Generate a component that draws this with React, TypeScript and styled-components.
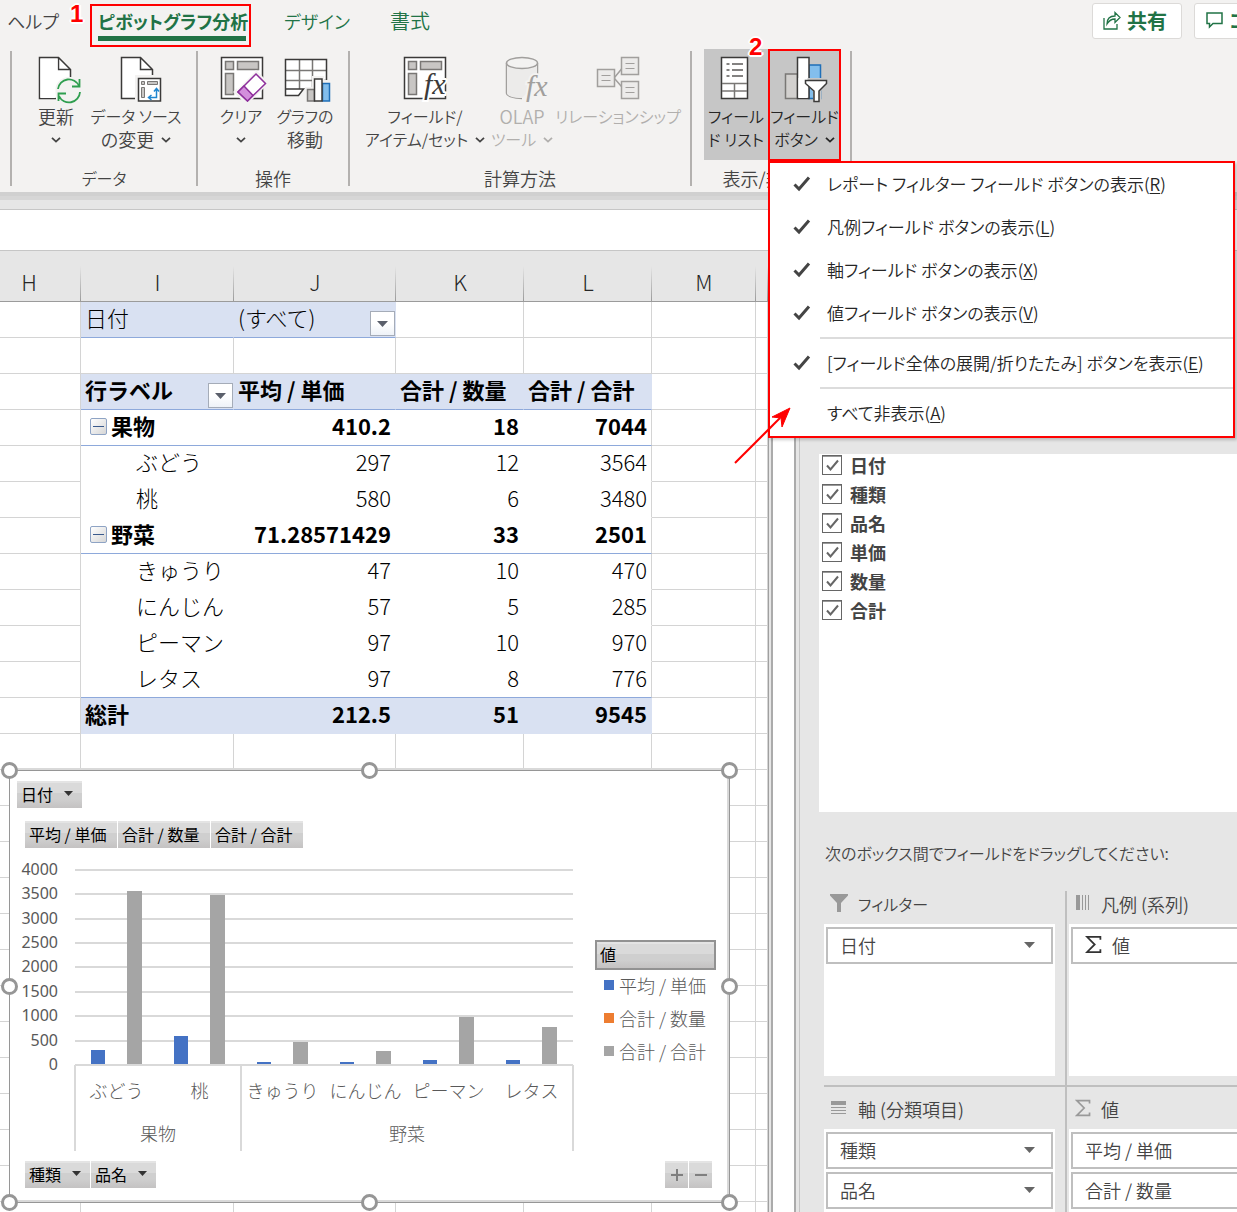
import React from "react";
import styled, { createGlobalStyle, css } from "styled-components";

const uiFont = `"Noto Sans CJK JP", "Noto Sans", sans-serif`;

const GlobalStyle = createGlobalStyle`
  * { box-sizing: border-box; }
  body {
    margin: 0;
    font-family: ${uiFont};
    font-weight: 300;
    color: #444;
    background: #e6e6e6;
  }
  button, input {
    margin: 0;
    padding: 0;
    border: 0;
    background: none;
    font: inherit;
    color: inherit;
  }
  svg { display: block; flex: none; }
`;

/* ---------- shell ---------- */

const Shell = styled.div`
  position: relative;
  display: flex;
  flex-direction: column;
  height: 100vh;
  overflow: hidden;
`;

const Ribbon = styled.header`
  flex: none;
  background: #f3f2f1;
  font-size: 18px;
  font-weight: 350;
  font-feature-settings: "palt";
`;

const TopBar = styled.div`
  display: flex;
  justify-content: space-between;
  height: 49px;
`;

const Tabs = styled.nav`
  display: flex;
  align-items: flex-start;
  padding-top: 4px;
  line-height: 34px;
`;

const Tab = styled.button<{ $accent?: boolean; $kanji?: boolean; $width: number }>`
  width: ${(p) => p.$width}px;
  font-size: ${(p) => (p.$kanji ? 20 : 18)}px;
  text-align: center;
  white-space: nowrap;
  color: ${(p) => (p.$accent ? "#217346" : "#444")};
`;

const ActiveTab = styled.button`
  display: flex;
  flex-direction: column;
  width: 161px;
  height: 43px;
  margin-left: 24px;
  padding: 0 3px 0 6px;
  border: 2px solid #f00;
  font-weight: 700;
  line-height: 30px;
  white-space: nowrap;
  color: #217346;
  &::after {
    content: "";
    width: 100%;
    height: 5px;
    background: #217346;
  }
`;

const Badge = styled.span<{ $x: number; $y: number }>`
  position: absolute;
  left: ${(p) => p.$x}px;
  top: ${(p) => p.$y}px;
  z-index: 5;
  font: 700 24px/24px "Liberation Sans", sans-serif;
  color: #f00;
  text-shadow: 2px 0 #fff, -2px 0 #fff, 0 2px #fff, 0 -2px #fff, 1px 1px #fff, -1px 1px #fff;
`;

const Actions = styled.div`
  display: flex;
  gap: 12px;
  width: 145px;
  padding-top: 3px;
  overflow: hidden;
`;

const ActionButton = styled.button<{ $width: number }>`
  display: flex;
  flex: none;
  align-items: center;
  gap: 6px;
  width: ${(p) => p.$width}px;
  height: 36px;
  padding: 0 10px 2px;
  border: 1px solid #dcdad8;
  border-radius: 3px;
  background: #fff;
  font-size: 20px;
  font-weight: 700;
  color: #217346;
  white-space: nowrap;
`;

const Groups = styled.div`
  display: flex;
  height: 143px;
  padding-left: 10px;
`;

const Divider = styled.span`
  flex: none;
  width: 2px;
  height: 135px;
  margin-top: 2px;
  background: #b3b1af;
`;

const Group = styled.section<{ $width: number; $pad: number }>`
  display: flex;
  flex-direction: column;
  flex: none;
  width: ${(p) => p.$width}px;
  & > div { padding-left: ${(p) => p.$pad}px; }
`;

const GroupTools = styled.div`
  display: flex;
  height: 112px;
`;

const GroupLabel = styled.h2<{ $kana?: boolean }>`
  margin: 0;
  padding-top: 5px;
  font-size: ${(p) => (p.$kana ? 16 : 18)}px;
  font-weight: 350;
  line-height: 24px;
  text-align: center;
`;

const Tool = styled.button<{ $width: number; $pressed?: boolean; $framed?: boolean }>`
  display: flex;
  flex-direction: column;
  align-items: center;
  flex: none;
  width: ${(p) => p.$width}px;
  height: 111px;
  padding-top: 6px;
  line-height: 23px;
  white-space: nowrap;
  ${(p) => p.$pressed && css`background: #c6c6c6; color: #262626;`}
  ${(p) => p.$framed && css`
    height: 112px;
    padding-top: 4px;
    border: 2px solid #f00;
  `}
  &:disabled { color: #b1afad; }
`;

const ToolLine = styled.span<{ $kanji?: boolean }>`
  display: flex;
  align-items: center;
  justify-content: center;
  gap: 7px;
  height: 23px;
  font-size: ${(p) => (p.$kanji ? 18 : 16)}px;
`;

const ToolText = styled.span`
  display: block;
  padding-top: 2px;
`;

const MenuAnchor = styled.div`
  position: relative;
`;

/* ---------- menu ---------- */

const Menu = styled.div`
  position: absolute;
  left: 0;
  top: 100%;
  z-index: 4;
  width: 467px;
  padding-bottom: 1px;
  border: 2px solid #f00;
  background: #fff;
  box-shadow: 2px 2px 3px rgba(0, 0, 0, 0.2);
  color: #262626;
`;

const MenuItem = styled.button`
  display: flex;
  align-items: center;
  width: 100%;
  height: 43px;
  padding: 0 0 2px 23px;
  font-size: 17px;
  white-space: nowrap;
  u { text-underline-offset: 2px; }
`;

const CheckSlot = styled.span`
  flex: none;
  width: 34px;
`;

const MenuRule = styled.hr`
  height: 2px;
  margin: 2px 0 3px 50px;
  border: 0;
  background: #dcdcdc;
`;

/* ---------- sheet ---------- */

const RibbonEdge = styled.div`
  flex: none;
  height: 18px;
  border-bottom: 1px solid #c6c6c6;
  background: linear-gradient(#d0d0d0 0 4px, #d6d6d6 4px 8px, #e6e6e6 8px);
`;

const FormulaBar = styled.div`
  flex: none;
  height: 41px;
  border-bottom: 1px solid #c6c6c6;
  background: #fff;
`;

const Body = styled.main`
  display: flex;
  flex: 1;
  min-height: 0;
`;

const Sheet = styled.section`
  position: relative;
  flex: 1;
  min-width: 0;
  overflow: hidden;
  background: #fff;
`;

const Grid = styled.table`
  width: 100%;
  table-layout: fixed;
  border-collapse: separate;
  border-spacing: 0;
  font-size: 22px;
  line-height: 30px;
  color: #000;
`;

const HeadCell = styled.th<{ $shift?: boolean }>`
  height: 51px;
  padding: 10px ${(p) => (p.$shift ? 23 : 0)}px 0 0;
  border-bottom: 1px solid #9b9b9b;
  background: linear-gradient(#e6e6e6, #9b9b9b) right bottom / 1px 35px no-repeat, #e6e6e6;
  font-weight: 300;
  color: #262626;
`;

type CellKind = "grid" | "plain" | "fill";

const Cell = styled.td<{ $kind: CellKind; $rule?: boolean; $edge?: boolean; $bold?: boolean; $num?: boolean; $indent?: boolean }>`
  height: 36px;
  padding: 0 4px 5px ${(p) => (p.$indent ? 55 : 4)}px;
  border-right: 1px solid ${(p) => (p.$kind === "grid" || p.$edge ? "#d4d4d4" : p.$kind === "fill" ? "#d9e1f2" : "#fff")};
  border-bottom: 1px solid
    ${(p) => (p.$rule ? "#8ea9db" : p.$kind === "grid" ? "#d4d4d4" : p.$kind === "fill" ? "#d9e1f2" : "#fff")};
  background: ${(p) => (p.$kind === "fill" ? "#d9e1f2" : "#fff")};
  font-weight: ${(p) => (p.$bold ? 700 : 300)};
  text-align: ${(p) => (p.$num ? "right" : "left")};
  white-space: nowrap;
  ${(p) => p.$rule && p.$kind === "plain" && css`border-right-width: ${p.$edge ? 1 : 0}px;`}
  ${(p) => p.$rule && p.$kind === "plain" && p.$num && !p.$edge && css`padding-right: 5px;`}
`;

const CellRow = styled.div`
  display: flex;
  align-items: center;
  justify-content: space-between;
  height: 30px;
`;

const CellLead = styled.span`
  display: flex;
  align-items: center;
  gap: 4px;
  padding-left: 5px;
`;

const FilterButton = styled.button`
  display: grid;
  place-items: center;
  width: 25px;
  height: 25px;
  margin: 9px -4px -4px 0;
  border: 1px solid #a5acb8;
  background: linear-gradient(#fff 50%, #eef2f8);
`;

const CollapseButton = styled.button`
  display: grid;
  place-items: center;
  width: 17px;
  height: 17px;
  margin-top: 3px;
  border: 1px solid #8ea3c4;
  border-radius: 2px;
  background: linear-gradient(135deg, #fff, #d6d6d6);
`;

/* ---------- chart ---------- */

const Chart = styled.section`
  position: absolute;
  left: 9px;
  top: 519px;
  display: flex;
  flex-direction: column;
  width: 721px;
  height: 433px;
  padding: 10px 17px 0 7px;
  border: 1px solid #969696;
  background: #fff;
  box-shadow: 0 -2px #d9d9d9, inset -2px -2px #d9d9d9;
`;

const ChartRow = styled.div<{ $top?: number; $inset?: boolean }>`
  display: flex;
  gap: 1px;
  margin-top: ${(p) => p.$top || 0}px;
  padding-left: ${(p) => (p.$inset ? 8 : 0)}px;
`;

const FieldButton = styled.button<{ $width: number }>`
  display: flex;
  align-items: center;
  gap: 11px;
  width: ${(p) => p.$width}px;
  height: 27px;
  padding: 0 0 2px 4px;
  background: linear-gradient(#e4e4e4 0 2px, #dadada 2px 12px, #cfcfcf 12px 18px, #c4c2c2);
  font-size: 16px;
  font-weight: 400;
  line-height: 24px;
  white-space: nowrap;
  color: #000;
`;

const ZoomButton = styled(FieldButton)`
  justify-content: center;
  padding: 0;
`;

const Spacer = styled.span`
  flex: 1;
`;

const PlotRow = styled.div`
  display: flex;
  height: 313px;
`;

const Legend = styled.div`
  width: 121px;
  margin: 92px 0 0 18px;
`;

const LegendTitle = styled(FieldButton)`
  height: 30px;
  border: 2px solid #929292;
  padding-left: 3px;
`;

const LegendList = styled.ul`
  margin: 0;
  padding: 0 0 0 9px;
  list-style: none;
`;

const LegendItem = styled.li<{ $color: string }>`
  display: flex;
  align-items: center;
  gap: 5px;
  height: 33px;
  padding-bottom: 4px;
  font-size: 18px;
  white-space: nowrap;
  color: #595959;
  &::before {
    content: "";
    width: 10px;
    height: 10px;
    background: ${(p) => p.$color};
  }
`;

const Handle = styled.i<{ $x: string; $y: string }>`
  position: absolute;
  left: ${(p) => p.$x};
  top: ${(p) => p.$y};
  width: 17px;
  height: 17px;
  margin: -9px;
  border: 3px solid #969696;
  border-radius: 50%;
  background: #fff;
`;

/* ---------- field pane ---------- */

const Gutter = styled.div`
  flex: none;
  width: 32px;
  background: linear-gradient(
    90deg,
    #a0a0a0 0 1px,
    #e6e6e6 1px 3px,
    #ababab 3px 5px,
    #fff 5px 26px,
    #ababab 26px 28px,
    #e6e6e6 28px 31px,
    #c6c6c6 31px
  );
`;

const Pane = styled.aside`
  flex: none;
  width: 437px;
  padding: 203px 0 0 19px;
  overflow: hidden;
  font-size: 18px;
  font-weight: 350;
  font-feature-settings: "palt";
`;

const FieldList = styled.div`
  display: flex;
  flex-direction: column;
  gap: 7px;
  height: 358px;
  padding: 0 3px;
  background: #fff;
`;

const FieldLabel = styled.label`
  display: grid;
  grid-template-columns: 20px auto;
  justify-content: start;
  align-items: center;
  column-gap: 8px;
  height: 22px;
  font-weight: 700;
  line-height: 22px;
  & > input, & > svg { grid-area: 1 / 1; }
  & > svg { pointer-events: none; }
`;

const FieldCheck = styled.input`
  appearance: none;
  width: 20px;
  height: 20px;
  border: 1px solid #666;
  box-shadow: inset 0 1px #999;
  background: #fff;
  & + svg { visibility: hidden; }
  &:checked + svg { visibility: visible; }
`;

const Hint = styled.p`
  margin: 29px 0 17px 6px;
  font-size: 16px;
  line-height: 24px;
  white-space: nowrap;
`;

const Zones = styled.div`
  display: grid;
  grid-template-columns: 241px 241px;
  margin-left: 5px;
`;

const Zone = styled.section<{ $side?: boolean; $lower?: boolean }>`
  padding: 0 10px 9px 0;
  border-top: ${(p) => (p.$lower ? "2px solid #bfbfbf" : "0")};
  ${(p) => p.$side && css`
    padding: 0 0 9px 4px;
    background: linear-gradient(#bfbfbf, #bfbfbf) left bottom / 2px ${p.$lower ? "100%" : "calc(100% - 9px)"} no-repeat;
  `}
`;

const ZoneTitle = styled.h3<{ $kana?: boolean }>`
  display: flex;
  align-items: center;
  gap: 10px;
  height: 42px;
  margin: 0;
  padding: 2px 0 0 6px;
  font-size: ${(p) => (p.$kana ? 16 : 18)}px;
  font-weight: 350;
  white-space: nowrap;
  & > svg { margin-bottom: 2px; }
`;

const ZoneBox = styled.div`
  display: flex;
  flex-direction: column;
  gap: 3px;
  height: 152px;
  padding: 3px 2px;
  background: #fff;
`;

const ZoneItem = styled.button`
  display: flex;
  align-items: center;
  gap: 10px;
  flex: none;
  height: 37px;
  padding: 0 16px 2px 12px;
  border: 2px solid #bfbfbf;
  text-align: left;
  white-space: nowrap;
`;

const Arrow = styled.svg`
  position: absolute;
  left: 730px;
  top: 400px;
  z-index: 6;
  pointer-events: none;
`;

/* ---------- icons ---------- */

const Chevron = () => (
  <svg width="10" height="6" viewBox="0 0 10 6" fill="none" stroke="currentColor" strokeWidth="1.800">
    <path d="M1 .8 5 4.6 9 .8" />
  </svg>
);

const Caret = ({ color = "#333" }: { color?: string }) => (
  <svg width="11" height="6" viewBox="0 0 11 6" fill={color}>
    <path d="M0 0h11L5.500 6z" />
  </svg>
);

const SmallCaret = () => (
  <svg width="9" height="5" viewBox="0 0 9 5" fill="#333">
    <path d="M0 0h9L4.500 5z" />
  </svg>
);

const MenuCheck = () => (
  <svg width="18" height="16" viewBox="0 0 18 16" fill="none" stroke="#444" strokeWidth="3">
    <path d="M1.500 8.500 6 13 16 1.500" />
  </svg>
);

const IconFrame = ({ children }: { children: React.ReactNode }) => (
  <svg width="48" height="48" viewBox="0 0 48 48" overflow="visible" fill="none" strokeWidth="1.500">
    {children}
  </svg>
);

const Page = ({ x }: { x: number }) => (
  <g transform={`translate(${x} 0)`} stroke="#3b3a39">
    <path fill="#fff" d="M.5 2.500h19l12 12v29H.5z" stroke="none" />
    <path d="M17 43.500H.5v-41h19l12 12V22M19.500 2.500v12h12" />
  </g>
);

const PivotFrame = () => (
  <g>
    <path fill="#fff" stroke="#3b3a39" d="M3.500 2.500h41v41h-41z" />
    <g fill="#c8c6c4" stroke="#797775">
      <path d="M7.500 6.500h8v8h-8zM19.500 6.500h21v8h-21zM7.500 18.500h8v21h-8z" />
    </g>
  </g>
);

const RefreshIcon = () => (
  <IconFrame>
    <Page x={7} />
    <circle cx="37" cy="36" r="14" fill="#f3f2f1" />
    <path fill="#fff" d="M8.500 4h17v12h-2v27h-15z" />
    <g stroke="#2f9e4f" strokeWidth="1.800">
      <path d="M26 34a11 11 0 0 1 21-3M48 37a11 11 0 0 1-21 4M47.500 24v7.500H40M26.500 46v-7.500H34" />
    </g>
  </IconFrame>
);

const SourceIcon = () => (
  <IconFrame>
    <Page x={9} />
    <path fill="#f3f2f1" d="M23 20h27v28H23z" />
    <path fill="#fff" stroke="#3b3a39" d="M26.500 23.500h22v22.500h-22z" />
    <g fill="#c8c6c4" stroke="#797775" strokeWidth="1">
      <path d="M29.500 26.500h3v3h-3zM35.500 26.500h10v3h-10zM29.500 32.500h3v10h-3z" />
    </g>
    <path stroke="#1f86d0" d="M44.500 34v8.500H37M42 36.500l2.500-3 2.500 3M39.500 40 36.500 42.500l3 2.500" />
  </IconFrame>
);

const ClearIcon = () => (
  <IconFrame>
    <g transform="translate(1 0)"><PivotFrame /></g>
    <path fill="#f3f2f1" d="M39 15 52 28 30 50 16 37z" />
    <path fill="#fff" d="M20 16h19L20 35z" />
    <path fill="#fff" stroke="#8e2f9c" d="M39 19 48.500 28.500 30.500 46 21 37z" />
    <path fill="#d38fdc" stroke="#8e2f9c" d="M27 31 36 40.500 30.500 46 21 37z" />
  </IconFrame>
);

const MoveChartIcon = () => (
  <IconFrame>
    <path fill="#fff" d="M4.500 4.500h41v29h-23l-5 7h-13z" />
    <path stroke="#797775" d="M5 15.500h40M5 25.500h40M18.500 5v29M31.500 5v29" />
    <path stroke="#3b3a39" d="M45.500 28V4.500h-41v36h13l5-6.500h-18" />
    <path fill="#f3f2f1" d="M31 21h12v4h7v24H24V32h7z" />
    <path fill="#c8c6c4" stroke="#797775" d="M26.500 34.500h7V46h-7z" />
    <path fill="#83beec" stroke="#1f6fb8" d="M41.500 28.500h7V46h-7z" />
    <path fill="#fff" stroke="#3b3a39" d="M33.500 24h7.500v22h-7.500z" />
  </IconFrame>
);

const Fx = ({ x, y, color, halo }: { x: number; y: number; color: string; halo: string }) => (
  <text
    x={x}
    y={y}
    fontFamily="Liberation Serif, serif"
    fontStyle="italic"
    fontSize="30"
    fontWeight="400"
    fill={color}
    stroke={halo}
    strokeWidth="4"
    paintOrder="stroke"
  >
    fx
  </text>
);

const FieldsIcon = () => (
  <IconFrame>
    <PivotFrame />
    <Fx x={23} y={39} color="#3b3a39" halo="#fff" />
  </IconFrame>
);

const OlapIcon = () => (
  <IconFrame>
    <path fill="#ecebea" stroke="#a19f9d" d="M8.500 8v30c0 3 7 5.500 15.500 5.500M39.500 8v13" />
    <path fill="#ecebea" d="M9 9h30v18L24 43C15 43 9 41 9 38z" />
    <ellipse cx="24" cy="8" rx="15.500" ry="5.500" fill="#f3f2f1" stroke="#a19f9d" />
    <Fx x={28} y={41} color="#a19f9d" halo="#f3f2f1" />
  </IconFrame>
);

const RelationIcon = () => (
  <IconFrame>
    <g stroke="#a19f9d">
      <path d="M20.500 22.500 27.500 14M20.500 23.500l7 8" />
      <path fill="#ecebea" d="M3.500 14.500h17v17h-17zM27.500 2.500h17v17h-17zM27.500 26.500h17v17h-17z" />
      <path strokeWidth="1" d="M7.500 20.500h9M7.500 25.500h9M31.500 8.500h9M31.500 13.500h9M31.500 32.500h9M31.500 37.500h9" />
    </g>
  </IconFrame>
);

const FieldListIcon = () => (
  <IconFrame>
    <path fill="#fff" stroke="#3b3a39" d="M9.500 2.500h26v41h-26z" />
    <path stroke="#797775" d="M10 28.500h25M10 36h25M22.500 28.500V43" />
    <path stroke="#5c5a58" d="M14.500 9h3M20 9h11M14.500 15h3M20 15h11M14.500 21h3M20 21h11" />
  </IconFrame>
);

const FieldButtonsIcon = () => (
  <IconFrame>
    <g transform="translate(4 0)">
      <path stroke="#797775" fill="#d2d0ce" d="M.5 19h12v24.500H.5z" />
      <path fill="#83beec" stroke="#1f6fb8" d="M24 10h11.500v33.500H24z" />
      <path fill="#fff" stroke="#3b3a39" d="M12.500 2.500H24v41H12.500z" />
      <path fill="#c6c6c6" d="M18.500 23H44v5l-8 8v12h-8V36l-9.500-9z" />
      <path fill="#fff" d="M13.500 23h9v20h-9z" />
      <path fill="#fff" stroke="#3b3a39" d="M20.500 25.500h21v3L34 36v10.500h-5V36l-8.500-7.500z" />
    </g>
  </IconFrame>
);

const ShareIcon = () => (
  <svg width="18" height="20" viewBox="0 0 18 20" fill="none" stroke="#217346" strokeWidth="1.300">
    <path d="M1 8v11h13v-5M4 14c0-5 3-8 8-8V2.500l5 5-5 5V9c-4 0-6 1.500-8 5z" />
  </svg>
);

const CommentIcon = () => (
  <svg width="18" height="18" viewBox="0 0 18 18" fill="none" stroke="#217346" strokeWidth="1.500">
    <path d="M2 2h15v10.500H8L4.500 16v-3.500H2z" />
  </svg>
);

const ColumnsIcon = () => (
  <svg width="16" height="16" viewBox="0 0 16 16" fill="#999">
    <path d="M1 0h4v15H1zM7 0h1v15H7zM10 0h1v15h-1zM13 0h1v15h-1z" />
  </svg>
);

const RowsIcon = () => (
  <svg width="18" height="16" viewBox="0 0 18 16" fill="#999">
    <path d="M1 1h15v4H1zM1 7h15v1H1zM1 10h15v1H1zM1 13h15v1H1z" />
  </svg>
);

const FunnelIcon = () => (
  <svg width="18" height="18" viewBox="0 0 18 18" fill="#999">
    <path d="M0 0h18v1.500L11 9v9H7V9L0 1.500z" />
  </svg>
);

const SigmaIcon = ({ color, size }: { color: string; size: number }) => (
  <svg width={size} height={size + 2} viewBox="0 0 14 16" fill="none" stroke={color} strokeWidth="1.500">
    <path d="M12.800 4V1.500H1.500L8 8l-6.500 6.500h11.300V12" />
  </svg>
);

/* ---------- data ---------- */

const columns = [
  ["H", 81],
  ["I", 153],
  ["J", 162],
  ["K", 128],
  ["L", 128],
  ["M", 104],
] as const;

const pivotRows = [
  { label: "果物", values: ["410.2", "18", "7044"], group: true },
  { label: "ぶどう", values: ["297", "12", "3564"] },
  { label: "桃", values: ["580", "6", "3480"] },
  { label: "野菜", values: ["71.28571429", "33", "2501"], group: true },
  { label: "きゅうり", values: ["47", "10", "470"] },
  { label: "にんじん", values: ["57", "5", "285"] },
  { label: "ピーマン", values: ["97", "10", "970"] },
  { label: "レタス", values: ["97", "8", "776"], last: true },
];

const chartData = [
  { name: "ぶどう", price: 297, total: 3564 },
  { name: "桃", price: 580, total: 3480 },
  { name: "きゅうり", price: 47, total: 470 },
  { name: "にんじん", price: 57, total: 285 },
  { name: "ピーマン", price: 97, total: 970 },
  { name: "レタス", price: 97, total: 776 },
];

const menuItems = [
  ["レポート フィルター フィールド ボタンの表示", "R"],
  ["凡例フィールド ボタンの表示", "L"],
  ["軸フィールド ボタンの表示", "X"],
  ["値フィールド ボタンの表示", "V"],
];

/* ---------- parts ---------- */

const blank = (n: number, from = 0) =>
  Array.from({ length: n }, (_, i) => <Cell key={from + i} $kind="grid" />);

const SheetGrid = () => (
  <Grid>
    <colgroup>
      {columns.map(([name, width]) => (
        <col key={name} style={{ width }} />
      ))}
      <col />
    </colgroup>
    <thead>
      <tr>
        {columns.map(([name]) => (
          <HeadCell key={name} scope="col" $shift={name === "H"}>
            {name}
          </HeadCell>
        ))}
        <HeadCell />
      </tr>
    </thead>
    <tbody>
      <tr>
        <Cell $kind="grid" />
        <Cell $kind="fill" $rule>日付</Cell>
        <Cell $kind="fill" $rule>
          <CellRow>
            (すべて)
            <FilterButton aria-label="日付">
              <Caret color="#5a5f6b" />
            </FilterButton>
          </CellRow>
        </Cell>
        {blank(4, 3)}
      </tr>
      <tr>{blank(7)}</tr>
      <tr>
        <Cell $kind="grid" />
        <Cell $kind="fill" $rule $bold>
          <CellRow>
            行ラベル
            <FilterButton aria-label="行ラベル">
              <Caret color="#5a5f6b" />
            </FilterButton>
          </CellRow>
        </Cell>
        <Cell $kind="fill" $rule $bold>平均 / 単価</Cell>
        <Cell $kind="fill" $rule $bold>合計 / 数量</Cell>
        <Cell $kind="fill" $rule $bold>合計 / 合計</Cell>
        {blank(2, 5)}
      </tr>
      {pivotRows.map((row) => (
        <tr key={row.label}>
          <Cell $kind="grid" />
          <Cell $kind="plain" $rule={row.group || row.last} $bold={row.group} $indent={!row.group}>
            {row.group ? (
              <CellLead>
                <CollapseButton aria-label={row.label}>
                  <svg width="11" height="1" viewBox="0 0 11 1">
                    <path fill="#3a5a8c" d="M0 0h11v1H0z" />
                  </svg>
                </CollapseButton>
                {row.label}
              </CellLead>
            ) : (
              row.label
            )}
          </Cell>
          {row.values.map((value, i) => (
            <Cell key={i} $kind="plain" $rule={row.group || row.last} $bold={row.group} $edge={i === 2} $num>
              {value}
            </Cell>
          ))}
          {blank(2, 5)}
        </tr>
      ))}
      <tr>
        <Cell $kind="grid" />
        <Cell $kind="fill" $bold>総計</Cell>
        <Cell $kind="fill" $bold $num>212.5</Cell>
        <Cell $kind="fill" $bold $num>51</Cell>
        <Cell $kind="fill" $bold $num>9545</Cell>
        {blank(2, 5)}
      </tr>
      {Array.from({ length: 14 }, (_, i) => (
        <tr key={i}>{blank(7)}</tr>
      ))}
    </tbody>
  </Grid>
);

const Plot = () => {
  const left = 58;
  const right = 556;
  const base = 217;
  const height = 195;
  const step = (right - left) / chartData.length;
  const tickY = (v: number) => base - Math.round((v / 4000) * height);
  const barHeight = (v: number) => Math.floor((v / 4000) * height);
  const ticks = [0, 500, 1000, 1500, 2000, 2500, 3000, 3500, 4000];
  return (
    <svg width="560" height="313" viewBox="0 0 560 313" fill="#595959" fontSize="18">
      {ticks.map((t) => (
        <g key={t}>
          <rect x={left} y={tickY(t) - 1} width={right - left} height="2" fill="#d9d9d9" />
          <text x="41" y={tickY(t) + 5} fontSize="16" fontWeight="400" fontFamily="Noto Sans, sans-serif" textAnchor="end">
            {t}
          </text>
        </g>
      ))}
      {chartData.map((d, i) => {
        const x = left + i * step;
        return (
          <g key={d.name}>
            <rect x={x + 16} y={base - 1 - barHeight(d.price)} width="14" height={barHeight(d.price)} fill="#4472c4" />
            <rect x={x + 52} y={base - 1 - barHeight(d.total)} width="15" height={barHeight(d.total)} fill="#a5a5a5" />
            <text x={x + step / 2} y={base + 33} textAnchor="middle">
              {d.name}
            </text>
          </g>
        );
      })}
      {[left, left + 2 * step, right].map((x) => (
        <rect key={x} x={x - 1} y={base} width="2" height="86" fill="#d9d9d9" />
      ))}
      <text x={left + step} y={base + 76} textAnchor="middle">果物</text>
      <text x={left + 4 * step} y={base + 76} textAnchor="middle">野菜</text>
    </svg>
  );
};

const end = "calc(100% + 1px)";
const handles = [
  ["0px", "0px"], ["50%", "0px"], [end, "0px"],
  ["0px", "50%"], [end, "50%"],
  ["0px", end], ["50%", end], [end, end],
];

const PivotChart = () => (
  <Chart>
    <ChartRow>
      <FieldButton $width={65}>日付 <SmallCaret /></FieldButton>
    </ChartRow>
    <ChartRow $top={13} $inset>
      <FieldButton $width={92}>平均 / 単価</FieldButton>
      <FieldButton $width={92}>合計 / 数量</FieldButton>
      <FieldButton $width={92}>合計 / 合計</FieldButton>
    </ChartRow>
    <PlotRow>
      <Plot />
      <Legend>
        <LegendTitle $width={121}>値</LegendTitle>
        <LegendList>
          <LegendItem $color="#4472c4">平均 / 単価</LegendItem>
          <LegendItem $color="#ed7d31">合計 / 数量</LegendItem>
          <LegendItem $color="#a5a5a5">合計 / 合計</LegendItem>
        </LegendList>
      </Legend>
    </PlotRow>
    <ChartRow $inset>
      <FieldButton $width={65}>種類 <SmallCaret /></FieldButton>
      <FieldButton $width={65}>品名 <SmallCaret /></FieldButton>
      <Spacer />
      <ZoomButton $width={23} aria-label="展開">
        <svg width="12" height="12" viewBox="0 0 12 12" fill="#7f7f7f"><path d="M0 5h5V0h2v5h5v2H7v5H5V7H0z" /></svg>
      </ZoomButton>
      <ZoomButton $width={23} aria-label="折りたたみ">
        <svg width="12" height="12" viewBox="0 0 12 12" fill="#7f7f7f"><path d="M0 5h12v2H0z" /></svg>
      </ZoomButton>
    </ChartRow>
    {handles.map(([x, y]) => (
      <Handle key={x + y} $x={x} $y={y} />
    ))}
  </Chart>
);

const FieldMenu = () => (
  <Menu role="menu">
    {menuItems.map(([text, key]) => (
      <MenuItem key={key} role="menuitemcheckbox" aria-checked>
        <CheckSlot><MenuCheck /></CheckSlot>
        <span>{text}(<u>{key}</u>)</span>
      </MenuItem>
    ))}
    <MenuRule />
    <MenuItem role="menuitemcheckbox" aria-checked>
      <CheckSlot><MenuCheck /></CheckSlot>
      <span>[フィールド全体の展開/折りたたみ] ボタンを表示(<u>E</u>)</span>
    </MenuItem>
    <MenuRule />
    <MenuItem role="menuitem">
      <CheckSlot />
      <span>すべて非表示(<u>A</u>)</span>
    </MenuItem>
  </Menu>
);

type ToolProps = {
  icon: React.ReactNode;
  first: string;
  second?: string;
  drop?: boolean;
  width: number;
  pressed?: boolean;
  framed?: boolean;
  disabled?: boolean;
};

const hasKanji = (text = "") => /[\u4e00-\u9fff]|^[A-Z]+$/.test(text);

const ToolButton = ({ icon, first, second, drop, width, pressed, framed, disabled }: ToolProps) => (
  <Tool $width={width} $pressed={pressed} $framed={framed} disabled={disabled}>
    {icon}
    <ToolText>
      <ToolLine $kanji={hasKanji(first)}>{first}</ToolLine>
      <ToolLine $kanji={hasKanji(second)}>
        {second}
        {drop && <Chevron />}
      </ToolLine>
    </ToolText>
  </Tool>
);

const FieldPane = () => (
  <Pane>
    <FieldList>
      {["日付", "種類", "品名", "単価", "数量", "合計"].map((name) => (
        <FieldLabel key={name}>
          <FieldCheck type="checkbox" defaultChecked />
          <svg width="20" height="20" viewBox="0 0 20 20" fill="none" stroke="#666" strokeWidth="2">
            <path d="M5 10.500 8.500 14.500 16 5.500" />
          </svg>
          {name}
        </FieldLabel>
      ))}
    </FieldList>
    <Hint>次のボックス間でフィールドをドラッグしてください:</Hint>
    <Zones>
      <Zone>
        <ZoneTitle $kana><FunnelIcon />フィルター</ZoneTitle>
        <ZoneBox>
          <ZoneItem>日付<Spacer /><Caret color="#666" /></ZoneItem>
        </ZoneBox>
      </Zone>
      <Zone $side>
        <ZoneTitle><ColumnsIcon />凡例 (系列)</ZoneTitle>
        <ZoneBox>
          <ZoneItem><SigmaIcon color="#333" size={17} />値</ZoneItem>
        </ZoneBox>
      </Zone>
      <Zone $lower>
        <ZoneTitle><RowsIcon />軸 (分類項目)</ZoneTitle>
        <ZoneBox>
          <ZoneItem>種類<Spacer /><Caret color="#666" /></ZoneItem>
          <ZoneItem>品名<Spacer /><Caret color="#666" /></ZoneItem>
        </ZoneBox>
      </Zone>
      <Zone $side $lower>
        <ZoneTitle><SigmaIcon color="#999" size={16} />値</ZoneTitle>
        <ZoneBox>
          <ZoneItem>平均 / 単価</ZoneItem>
          <ZoneItem>合計 / 数量</ZoneItem>
        </ZoneBox>
      </Zone>
    </Zones>
  </Pane>
);

export default function App() {
  return (
    <Shell>
      <GlobalStyle />
      <Ribbon>
        <TopBar>
          <Tabs>
            <Tab $width={66}>ヘルプ</Tab>
            <ActiveTab>ピボットグラフ分析</ActiveTab>
            <Tab $width={132} $accent>デザイン</Tab>
            <Tab $width={54} $accent $kanji>書式</Tab>
          </Tabs>
          <Actions>
            <ActionButton $width={90}><ShareIcon />共有</ActionButton>
            <ActionButton $width={120}><CommentIcon />コメント</ActionButton>
          </Actions>
        </TopBar>
        <Groups>
          <Divider />
          <Group $width={184} $pad={14}>
            <GroupTools>
              <ToolButton icon={<RefreshIcon />} first="更新" drop width={60} />
              <ToolButton icon={<SourceIcon />} first="データ ソース" second="の変更" drop width={100} />
            </GroupTools>
            <GroupLabel $kana>データ</GroupLabel>
          </Group>
          <Divider />
          <Group $width={150} $pad={13}>
            <GroupTools>
              <ToolButton icon={<ClearIcon />} first="クリア" drop width={60} />
              <ToolButton icon={<MoveChartIcon />} first="グラフの" second="移動" width={68} />
            </GroupTools>
            <GroupLabel>操作</GroupLabel>
          </Group>
          <Divider />
          <Group $width={340} $pad={11}>
            <GroupTools>
              <ToolButton icon={<FieldsIcon />} first="フィールド/" second="アイテム/セット" drop width={128} />
              <ToolButton icon={<OlapIcon />} first="OLAP" second="ツール" drop width={66} disabled />
              <ToolButton icon={<RelationIcon />} first="リレーションシップ" width={126} disabled />
            </GroupTools>
            <GroupLabel>計算方法</GroupLabel>
          </Group>
          <Divider />
          <Group $width={158} $pad={12}>
            <GroupTools>
              <ToolButton icon={<FieldListIcon />} first="フィール" second="ド リスト" width={64} pressed />
              <MenuAnchor>
                <ToolButton icon={<FieldButtonsIcon />} first="フィールド" second="ボタン" drop width={73} pressed framed />
                <FieldMenu />
              </MenuAnchor>
            </GroupTools>
            <GroupLabel>表示/非表示</GroupLabel>
          </Group>
          <Divider />
        </Groups>
      </Ribbon>
      <RibbonEdge />
      <FormulaBar />
      <Body>
        <Sheet>
          <SheetGrid />
          <PivotChart />
        </Sheet>
        <Gutter />
        <FieldPane />
      </Body>
      <Badge $x={70} $y={2}>1</Badge>
      <Badge $x={749} $y={35}>2</Badge>
      <Arrow width="66" height="68" viewBox="0 0 66 68">
        <path d="M5 63 50 18" stroke="#f00" strokeWidth="2" />
        <path d="M60 8 42 17l9 1 1 9z" fill="#f00" stroke="#f00" />
      </Arrow>
    </Shell>
  );
}
